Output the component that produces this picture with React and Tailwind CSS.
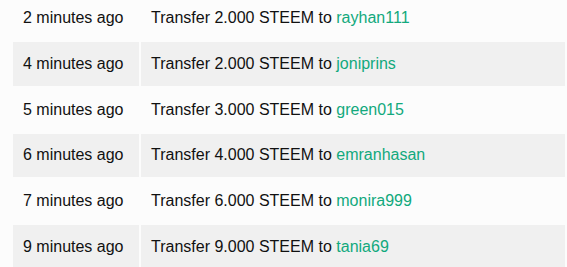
const rows = [
  { time: '2 minutes ago', amount: '2.000', to: 'rayhan111' },
  { time: '4 minutes ago', amount: '2.000', to: 'joniprins' },
  { time: '5 minutes ago', amount: '3.000', to: 'green015' },
  { time: '6 minutes ago', amount: '4.000', to: 'emranhasan' },
  { time: '7 minutes ago', amount: '6.000', to: 'monira999' },
  { time: '9 minutes ago', amount: '9.000', to: 'tania69' },
]

export default function App() {
  return (
    <div className="w-[567px] h-[267px] overflow-hidden bg-[#fcfcfc] font-['Liberation_Sans',Arial,sans-serif] text-[16px] text-[#111]">
      <div className="mt-[-3.75px] ml-[13px] mr-[2px] flex flex-col gap-[2px]">
        {rows.map((r, i) => {
          const bg = i % 2 === 1 ? 'bg-[#f0f0f0]' : 'bg-[#fcfcfc]'
          return (
            <div key={r.to} className="flex gap-[2px] h-[43.75px]">
              <div className={`w-[126px] shrink-0 flex items-center pl-[10px] ${bg}`}>
                {r.time}
              </div>
              <div className={`flex-1 flex items-center pl-[10px] ${bg}`}>
                <span>
                  Transfer {r.amount} STEEM to{' '}
                  <a href="#" className="text-[#12a97d]">{r.to}</a>
                </span>
              </div>
            </div>
          )
        })}
      </div>
    </div>
  )
}
